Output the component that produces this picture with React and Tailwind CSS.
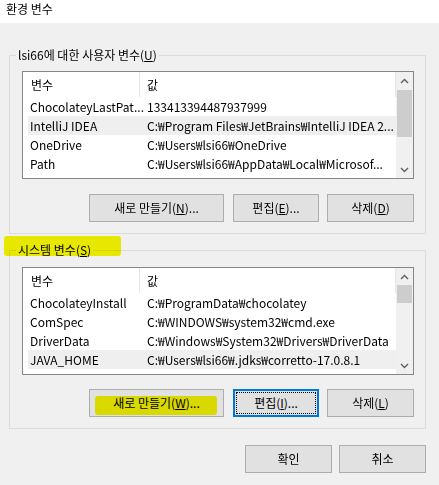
import React from "react";

const FONT = { fontFamily: '"Noto Sans CJK KR", "Noto Sans", sans-serif' };

const userVars = [
  ["ChocolateyLastPat...", "133413394487937999", false],
  ["IntelliJ IDEA", "C:₩Program Files₩JetBrains₩IntelliJ IDEA 2...", true],
  ["OneDrive", "C:₩Users₩lsi66₩OneDrive", false],
  ["Path", "C:₩Users₩lsi66₩AppData₩Local₩Microsof...", false],
];

const sysVars = [
  ["ChocolateyInstall", "C:₩ProgramData₩chocolatey", false],
  ["ComSpec", "C:₩WINDOWS₩system32₩cmd.exe", false],
  ["DriverData", "C:₩Windows₩System32₩Drivers₩DriverData", false],
  ["JAVA_HOME", "C:₩Users₩lsi66₩.jdks₩corretto-17.0.8.1", true],
];

function Chevron({ up }) {
  return (
    <svg width="9" height="6" viewBox="0 0 9 6">
      <path
        d={up ? "M1 5 L4.5 1.5 L8 5" : "M1 1 L4.5 4.5 L8 1"}
        fill="none"
        stroke="#606060"
        strokeWidth="1.4"
      />
    </svg>
  );
}

function Mn({ children }) {
  return <span className="underline underline-offset-[1px]">{children}</span>;
}

function VarList({ rows, thumbTop, thumbHeight }) {
  return (
    <div className="w-[392px] h-[108px] border border-[#828790] bg-white flex overflow-hidden">
      <div className="flex-1 flex flex-col overflow-hidden">
        <div className="h-[25px] flex shrink-0">
          <div className="w-[117px] border-r border-[#e5e5e5] pl-[8px] flex items-center">변수</div>
          <div className="flex-1 border-r border-[#e5e5e5] pl-[7px] flex items-center">값</div>
        </div>
        {rows.map(([name, value, sel]) => (
          <div
            key={name}
            className={`h-[19px] ml-[5px] flex items-center shrink-0 whitespace-nowrap ${sel ? "bg-[#efefef]" : ""}`}
          >
            <div className="w-[113px] shrink-0 pl-[2px]">{name}</div>
            <div className="flex-1 pl-[6px] overflow-hidden">{value}</div>
          </div>
        ))}
      </div>
      <div className="w-[17px] bg-[#f0f0f0] flex flex-col">
        <div className="h-[17px] flex items-center justify-center">
          <Chevron up />
        </div>
        <div className="flex-1">
          <div className="mx-[1px] bg-[#cdcdcd]" style={{ marginTop: thumbTop, height: thumbHeight }} />
        </div>
        <div className="h-[17px] flex items-center justify-center">
          <Chevron />
        </div>
      </div>
    </div>
  );
}

function Btn({ w, children, focused, className = "" }) {
  return (
    <div
      className={`relative h-[28px] flex items-center justify-center bg-[#e1e1e1] ${
        focused ? "border-2 border-[#0078d7]" : "border border-[#adadad]"
      } ${w} ${className}`}
    >
      {focused && <span className="absolute inset-[1px] border border-dotted border-black" />}
      {children}
    </div>
  );
}

export default function App() {
  return (
    <div className="w-[439px] h-[485px] bg-[#f0f0f0] text-[12px] leading-[16px] text-black overflow-hidden" style={FONT}>
      <div className="h-[23px] bg-white pl-[6px] pt-[1px]">환경 변수</div>

      <div className="ml-[9px] w-[417px]">
        {/* user variables */}
        <div className="relative mt-[32px] h-[179px] border border-[#dcdcdc] pt-[15px] pl-[12px]">
          <span className="absolute -top-[9px] left-[6px] px-[2px] bg-[#f0f0f0]">
            lsi66에 대한 사용자 변수(<Mn>U</Mn>)
          </span>
          <VarList rows={userVars} thumbTop={1} thumbHeight={47} />
          <div className="w-[392px] mt-[15px] flex justify-end">
            <Btn w="w-[135px]">
              새로 만들기(<Mn>N</Mn>)...
            </Btn>
            <Btn w="w-[86px]" className="ml-[9px]">
              편집(<Mn>E</Mn>)...
            </Btn>
            <Btn w="w-[87px]" className="ml-[8px]">
              삭제(<Mn>D</Mn>)
            </Btn>
          </div>
        </div>

        {/* system variables */}
        <div className="relative mt-[16px] h-[179px] border border-[#dcdcdc] pt-[16px] pl-[12px]">
          <span className="absolute -top-[9px] left-[6px] px-[2px] bg-[#f0f0f0]">
            시스템 변수(<Mn>S</Mn>)
          </span>
          <span className="absolute -top-[15px] -left-[6px] w-[117px] h-[20px] rounded-[3px] bg-[#f6f600] mix-blend-multiply pointer-events-none" />
          <VarList rows={sysVars} thumbTop={0} thumbHeight={18} />
          <div className="w-[392px] mt-[14px] flex justify-end">
            <Btn w="w-[135px]">
              새로 만들기(<Mn>W</Mn>)...
              <span className="absolute top-[6px] left-[5px] w-[122px] h-[19px] rounded-[3px] bg-[#f6f600] mix-blend-multiply pointer-events-none" />
            </Btn>
            <Btn w="w-[86px]" className="ml-[9px]" focused>
              편집(<Mn>I</Mn>)...
            </Btn>
            <Btn w="w-[87px]" className="ml-[8px]">
              삭제(<Mn>L</Mn>)
            </Btn>
          </div>
        </div>

        {/* dialog buttons */}
        <div className="mt-[16px] flex justify-end">
          <Btn w="w-[87px]">확인</Btn>
          <Btn w="w-[87px]" className="ml-[7px]">
            취소
          </Btn>
        </div>
      </div>
    </div>
  );
}
